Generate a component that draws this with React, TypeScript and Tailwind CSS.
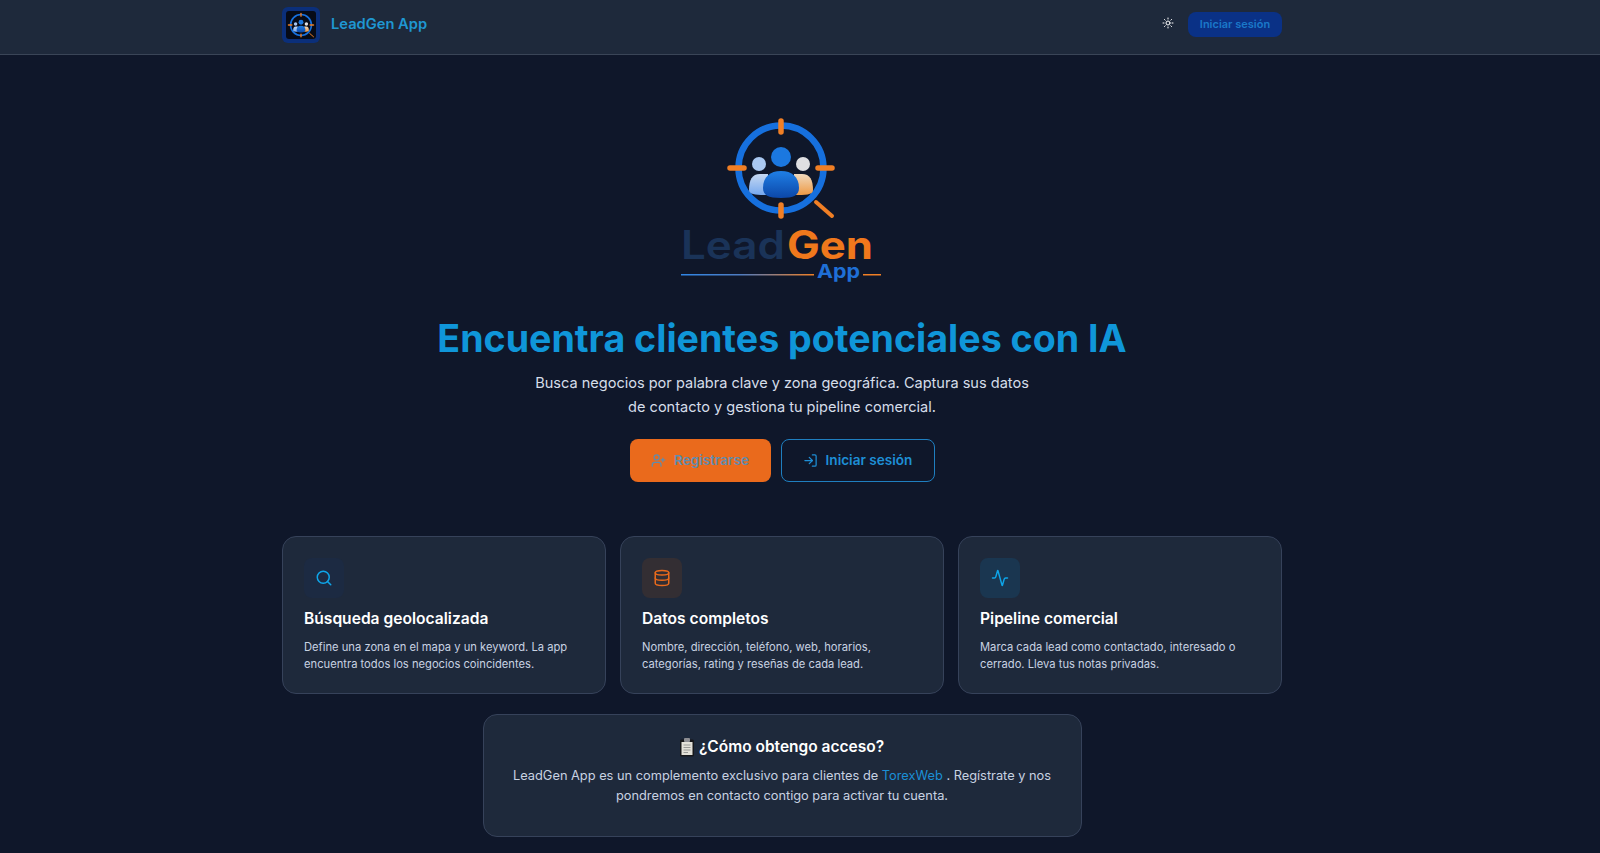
import { Activity, Database, LogIn, Search, Sun, UserPlus } from "lucide-react";

const features = [
  {
    title: "Búsqueda geolocalizada",
    text: ["Define una zona en el mapa y un keyword. La app", "encuentra todos los negocios coincidentes."],
    icon: <Search size={18} className="text-[#0ea5e9]" />,
    iconBg: "bg-[#1c2a42]",
  },
  {
    title: "Datos completos",
    text: ["Nombre, dirección, teléfono, web, horarios,", "categorías, rating y reseñas de cada lead."],
    icon: <Database size={18} className="text-[#ea6a1c]" />,
    iconBg: "bg-[#332e33]",
  },
  {
    title: "Pipeline comercial",
    text: ["Marca cada lead como contactado, interesado o", "cerrado. Lleva tus notas privadas."],
    icon: <Activity size={18} className="text-[#0ea5e9]" />,
    iconBg: "bg-[#1a3650]",
  },
];

// Target + people mark, also used small in the header
function LogoMark({ idPrefix }: { idPrefix: string }) {
  return (
    <>
      <defs>
        <linearGradient id={`${idPrefix}-body`} x1="0" y1="0" x2="0" y2="1">
          <stop offset="0" stopColor="#1f7fe6" />
          <stop offset="1" stopColor="#0c47a8" />
        </linearGradient>
        <linearGradient id={`${idPrefix}-left`} x1="0" y1="0" x2="0" y2="1">
          <stop offset="0" stopColor="#c5d8f2" />
          <stop offset="1" stopColor="#76a8ee" />
        </linearGradient>
        <linearGradient id={`${idPrefix}-right`} x1="0" y1="0" x2="0" y2="1">
          <stop offset="0" stopColor="#f0d9bd" />
          <stop offset="1" stopColor="#ee9a45" />
        </linearGradient>
      </defs>
      <line x1="156" y1="102" x2="172" y2="116" stroke="#f07f25" strokeWidth="4" strokeLinecap="round" />
      <circle cx="121" cy="68" r="42.5" fill="none" stroke="#1670de" strokeWidth="6.5" />
      <circle cx="99" cy="64" r="7" fill="#a9c8f2" />
      <circle cx="143" cy="64" r="7" fill="#dfdfe2" />
      <path d="M89 90 C89 80 92 74 100 74 L108 74 L108 95 C97 95 89 95 89 90 Z" fill={`url(#${idPrefix}-left)`} />
      <path d="M153 90 C153 80 150 74 142 74 L134 74 L134 95 C145 95 153 95 153 90 Z" fill={`url(#${idPrefix}-right)`} />
      <circle cx="121" cy="57" r="10" fill="#1b78e0" />
      <path
        d="M103 88 C103 77 110 71 121 71 C132 71 139 77 139 88 C139 95 134 98 121 98 C108 98 103 95 103 88 Z"
        fill={`url(#${idPrefix}-body)`}
      />
      <g stroke="#f07f25" strokeWidth="5.5" strokeLinecap="round">
        <line x1="121" y1="21" x2="121" y2="32" />
        <line x1="121" y1="105" x2="121" y2="116" />
        <line x1="70" y1="68" x2="84" y2="68" />
        <line x1="158" y1="68" x2="172" y2="68" />
      </g>
    </>
  );
}

function HeroLogo() {
  return (
    <svg width="240" height="200" viewBox="2 0 240 200" className="block">
      <defs>
        <linearGradient id="hero-line" x1="0" y1="0" x2="1" y2="0">
          <stop offset="0" stopColor="#2f86e6" />
          <stop offset="0.45" stopColor="#4f7cc0" />
          <stop offset="1" stopColor="#f07f25" />
        </linearGradient>
      </defs>
      <LogoMark idPrefix="hero" />
      <text
        x="21"
        y="159"
        fontFamily="Inter, sans-serif"
        fontWeight="600"
        fontSize="39"
        textLength="104"
        lengthAdjust="spacingAndGlyphs"
        fill="#1a3358"
      >
        Lead
      </text>
      <text
        x="127"
        y="159"
        fontFamily="Inter, sans-serif"
        fontWeight="700"
        fontSize="39"
        textLength="86"
        lengthAdjust="spacingAndGlyphs"
        fill="#f0781c"
      >
        Gen
      </text>
      <text
        x="157"
        y="178"
        fontFamily="Inter, sans-serif"
        fontWeight="700"
        fontSize="19"
        textLength="43"
        lengthAdjust="spacingAndGlyphs"
        fill="#1f6fd6"
      >
        App
      </text>
      <rect x="21" y="174" width="133" height="1.5" fill="url(#hero-line)" />
      <rect x="203" y="174" width="18" height="1.5" fill="#f07f25" />
    </svg>
  );
}

function ClipboardEmoji() {
  return (
    <svg width="14" height="19" viewBox="0 0 14 19" className="mr-[5px] inline-block">
      <rect x="0" y="1.5" width="14" height="17" rx="1.5" fill="#17171a" />
      <rect x="1.5" y="4" width="11" height="13" fill="#e4e1d8" />
      <rect x="4" y="0" width="6" height="4" rx="1" fill="#8d8d92" />
      <g stroke="#9a9a96" strokeWidth="1">
        <line x1="3.5" y1="7" x2="10.5" y2="7" />
        <line x1="3.5" y1="9.5" x2="10.5" y2="9.5" />
        <line x1="3.5" y1="12" x2="10.5" y2="12" />
        <line x1="3.5" y1="14.5" x2="8" y2="14.5" />
      </g>
    </svg>
  );
}

export default function App() {
  return (
    <div className="h-screen overflow-hidden bg-[#0f172a] font-['Inter',sans-serif] text-white">
      <header className="h-[55px] border-b border-[#3a4557] bg-[#1e293b] pr-9">
        <div className="mx-auto flex h-[54px] max-w-[1000px] items-center justify-between pb-[5px]">
          <div className="flex items-center gap-[11px]">
            <div className="flex h-[36px] w-[38px] items-center justify-center rounded-[6px] bg-[#0b2f7a] p-1">
              <div className="h-full w-full overflow-hidden rounded-[3px] bg-[#070b17]">
                <svg viewBox="60 12 122 112" className="h-full w-full">
                  <LogoMark idPrefix="nav" />
                </svg>
              </div>
            </div>
            <span className="text-[14.7px] font-semibold text-[#1f97d2]">LeadGen App</span>
          </div>
          <div className="flex items-center gap-[14px]">
            <Sun size={12} className="-mt-1 text-white" />
            <button className="h-[25px] w-[94px] rounded-[8px] bg-[#0a3186] text-[11px] font-semibold text-[#1a78c9]">
              Iniciar sesión
            </button>
          </div>
        </div>
      </header>

      <main className="pr-9">
        <div className="mx-auto flex max-w-[1000px] flex-col items-center">
          <div className="mt-[45px]">
            <HeroLogo />
          </div>
          <h1 className="mt-[15px] text-center text-[37.6px] leading-[48px] font-bold text-[#0f96d9]">
            Encuentra clientes potenciales con IA
          </h1>
          <p className="mt-[9px] text-center text-[14.56px] leading-[23.5px] text-[#d5dde9]">
            Busca negocios por palabra clave y zona geográfica. Captura sus datos
            <br />
            de contacto y gestiona tu pipeline comercial.
          </p>
          <div className="mt-[20px] flex gap-[10px]">
            <button className="flex h-[43px] w-[141px] items-center justify-center gap-2 rounded-[8px] bg-[#ea6a1c] text-[13.6px] font-semibold text-[#5f8cae]">
              <UserPlus size={15} />
              Registrarse
            </button>
            <button className="flex h-[43px] w-[154px] items-center justify-center gap-2 rounded-[8px] border border-[#1f7fc0] text-[13.6px] font-semibold text-[#1e8fd6]">
              <LogIn size={15} />
              Iniciar sesión
            </button>
          </div>

          <div className="mt-[54px] grid w-full grid-cols-3 gap-[14px]">
            {features.map((feature) => (
              <div
                key={feature.title}
                className="h-[158px] rounded-[14px] border border-[#36425a] bg-[#1e293b] px-[21px] pt-[21px]"
              >
                <div className={`flex h-10 w-10 items-center justify-center rounded-[8px] ${feature.iconBg}`}>
                  {feature.icon}
                </div>
                <h3 className="mt-[9px] text-[15.6px] leading-[24px] font-semibold text-white">{feature.title}</h3>
                <p className="mt-[8px] text-[11.2px] leading-[17px] whitespace-nowrap text-[#c8d2e2]">
                  {feature.text[0]}
                  <br />
                  {feature.text[1]}
                </p>
              </div>
            ))}
          </div>

          <div className="mt-[20px] h-[123px] w-[599px] rounded-[14px] border border-[#36425a] bg-[#1e293b] px-6 pt-[20px] text-center">
            <h3 className="flex items-center justify-center text-[15.5px] leading-[24px] font-semibold text-white">
              <ClipboardEmoji />
              ¿Cómo obtengo acceso?
            </h3>
            <p className="mt-[7px] text-[12.8px] leading-[19.6px] text-[#c8d2e2]">
              LeadGen App es un complemento exclusivo para clientes de <span className="text-[#1b8fd6]">TorexWeb</span> . Regístrate y nos
              <br />
              pondremos en contacto contigo para activar tu cuenta.
            </p>
          </div>
        </div>
      </main>
    </div>
  );
}
